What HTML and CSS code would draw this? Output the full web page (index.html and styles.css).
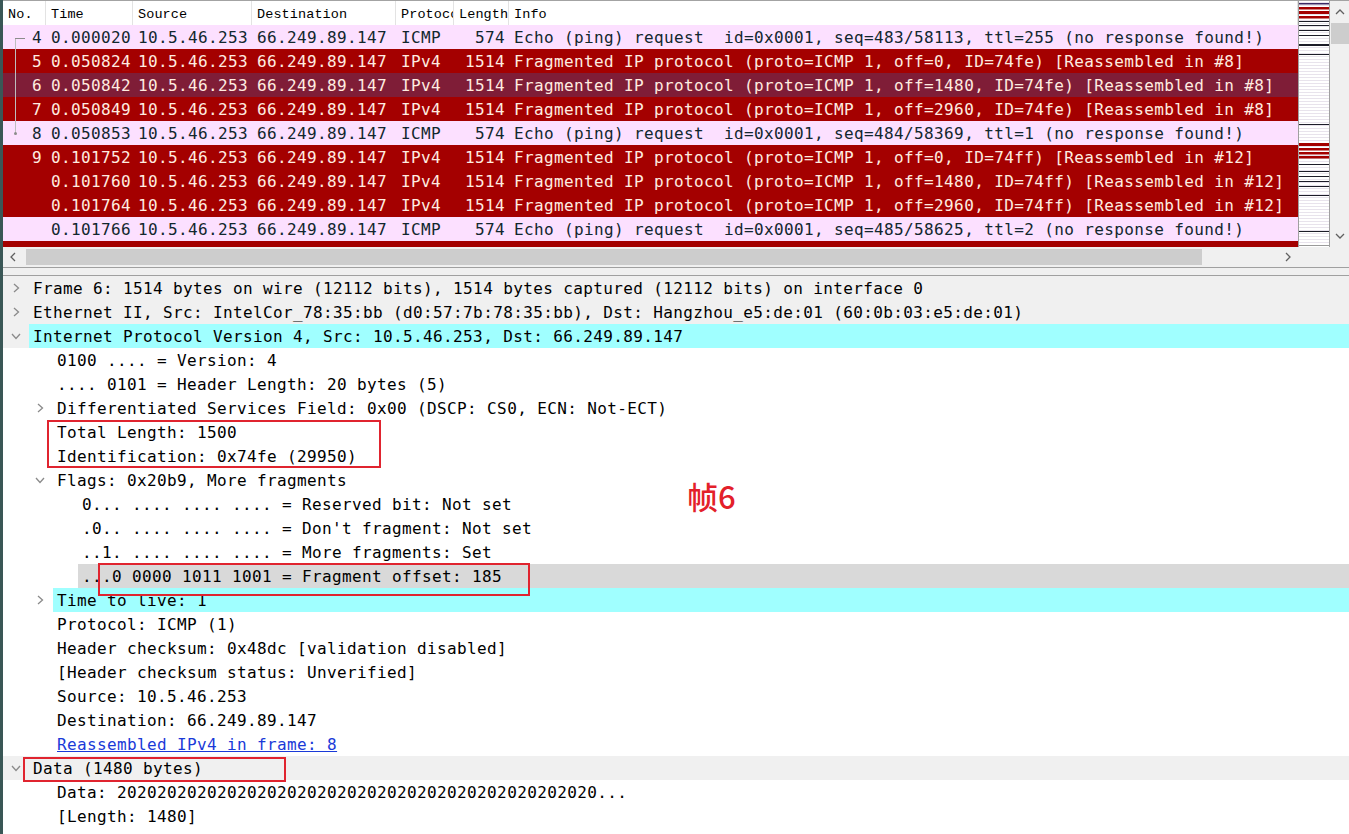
FILE: index.html
```html
<!DOCTYPE html>
<html lang="zh-CN">

<head>
    <meta charset="UTF-8">
    <meta name="viewport" content="width=device-width, initial-scale=1.0">
    <title>Wireshark - 帧6</title>
    <link rel="stylesheet" href="styles.css">
</head>

<body>
    <div class="window">
        <!-- lista de pacotes -->
        <div class="packet-top">
            <div class="packet-list">
                <div class="plist-head">
                    <div class="hc">No.</div>
                    <div class="hc">Time</div>
                    <div class="hc">Source</div>
                    <div class="hc">Destination</div>
                    <div class="hc">Protocol</div>
                    <div class="hc">Length</div>
                    <div class="hc">Info</div>
                </div>

                <div class="prow icmp"><div class="c r">4</div><div class="c">0.000020</div><div class="c">10.5.46.253</div><div class="c">66.249.89.147</div><div class="c">ICMP</div><div class="c r">574</div><div class="c">Echo (ping) request  id=0x0001, seq=483/58113, ttl=255 (no response found!)</div></div>
                <div class="prow frag"><div class="c r">5</div><div class="c">0.050824</div><div class="c">10.5.46.253</div><div class="c">66.249.89.147</div><div class="c">IPv4</div><div class="c r">1514</div><div class="c">Fragmented IP protocol (proto=ICMP 1, off=0, ID=74fe) [Reassembled in #8]</div></div>
                <div class="prow sel"><div class="c r">6</div><div class="c">0.050842</div><div class="c">10.5.46.253</div><div class="c">66.249.89.147</div><div class="c">IPv4</div><div class="c r">1514</div><div class="c">Fragmented IP protocol (proto=ICMP 1, off=1480, ID=74fe) [Reassembled in #8]</div></div>
                <div class="prow frag"><div class="c r">7</div><div class="c">0.050849</div><div class="c">10.5.46.253</div><div class="c">66.249.89.147</div><div class="c">IPv4</div><div class="c r">1514</div><div class="c">Fragmented IP protocol (proto=ICMP 1, off=2960, ID=74fe) [Reassembled in #8]</div></div>
                <div class="prow icmp"><div class="c r">8</div><div class="c">0.050853</div><div class="c">10.5.46.253</div><div class="c">66.249.89.147</div><div class="c">ICMP</div><div class="c r">574</div><div class="c">Echo (ping) request  id=0x0001, seq=484/58369, ttl=1 (no response found!)</div></div>
                <div class="prow frag"><div class="c r">9</div><div class="c">0.101752</div><div class="c">10.5.46.253</div><div class="c">66.249.89.147</div><div class="c">IPv4</div><div class="c r">1514</div><div class="c">Fragmented IP protocol (proto=ICMP 1, off=0, ID=74ff) [Reassembled in #12]</div></div>
                <div class="prow frag"><div class="c r"></div><div class="c">0.101760</div><div class="c">10.5.46.253</div><div class="c">66.249.89.147</div><div class="c">IPv4</div><div class="c r">1514</div><div class="c">Fragmented IP protocol (proto=ICMP 1, off=1480, ID=74ff) [Reassembled in #12]</div></div>
                <div class="prow frag"><div class="c r"></div><div class="c">0.101764</div><div class="c">10.5.46.253</div><div class="c">66.249.89.147</div><div class="c">IPv4</div><div class="c r">1514</div><div class="c">Fragmented IP protocol (proto=ICMP 1, off=2960, ID=74ff) [Reassembled in #12]</div></div>
                <div class="prow icmp"><div class="c r"></div><div class="c">0.101766</div><div class="c">10.5.46.253</div><div class="c">66.249.89.147</div><div class="c">ICMP</div><div class="c r">574</div><div class="c">Echo (ping) request  id=0x0001, seq=485/58625, ttl=2 (no response found!)</div></div>
                <div class="prow frag"><div class="c r"></div><div class="c">0.152790</div><div class="c">10.5.46.253</div><div class="c">66.249.89.147</div><div class="c">IPv4</div><div class="c r">1514</div><div class="c">Fragmented IP protocol (proto=ICMP 1, off=0, ID=7500) [Reassembled in #16]</div></div>

                <!-- linha de pacotes relacionados -->
                <div class="rel-line"></div>
            </div>

            <div class="minimap">
                <svg width="30" height="245" viewBox="0 0 30 245">
                    <defs>
                        <pattern id="faint" width="30" height="3" patternUnits="userSpaceOnUse">
                            <rect y="1" width="30" height="1" fill="#e8e3ec"/>
                        </pattern>
                    </defs>
                    <rect width="30" height="245" fill="#fff"/>
                    <rect width="30" height="245" fill="url(#faint)"/>
                    <rect y="2" width="30" height="1.5" fill="#3b2a66"/>
                    <rect y="6" width="30" height="2.5" fill="#a40000"/>
                    <rect y="10" width="30" height="3" fill="#a40000"/>
                    <rect y="15" width="30" height="2.5" fill="#a40000"/>
                    <rect y="20" width="30" height="1" fill="#1c1c28"/>
                    <rect y="24" width="30" height="1" fill="#1c1c28"/>
                    <rect y="29" width="30" height="1" fill="#1c1c28"/>
                    <rect y="34" width="30" height="1" fill="#1c1c28"/>
                    <rect y="43" width="30" height="2" fill="#1c1c28"/>
                    <rect y="53" width="30" height="1" fill="#1c1c28"/>
                    <rect y="123" width="30" height="1" fill="#1c1c28"/>
                    <rect y="142" width="30" height="3" fill="#a40000"/>
                    <rect y="147" width="30" height="2.5" fill="#a40000"/>
                    <rect y="151" width="30" height="2.5" fill="#a40000"/>
                    <rect y="155" width="30" height="2.5" fill="#a40000"/>
                    <rect y="163" width="30" height="1" fill="#1c1c28"/>
                    <rect y="170" width="30" height="1" fill="#1c1c28"/>
                    <rect y="175" width="30" height="1" fill="#1c1c28"/>
                    <rect y="180" width="30" height="1" fill="#1c1c28"/>
                    <rect y="185" width="30" height="1" fill="#1c1c28"/>
                    <rect y="194" width="30" height="1" fill="#1c1c28"/>
                    <rect y="230" width="30" height="1" fill="#1c1c28"/>
                    <rect y="244" width="30" height="1" fill="#9a9a9a"/>
                </svg>
            </div>

            <div class="vscroll">
                <div class="vs-arrow"><svg width="10" height="6"><polyline points="1,5 5,1 9,5" fill="none" stroke="#606060" stroke-width="1.3"/></svg></div>
                <div class="vs-thumb"></div>
                <div class="vs-track"></div>
                <div class="vs-arrow"><svg width="10" height="6"><polyline points="1,1 5,5 9,1" fill="none" stroke="#606060" stroke-width="1.3"/></svg></div>
            </div>
        </div>

        <div class="hscroll">
            <div class="hs-arrow"><svg width="6" height="10"><polyline points="5,1 1,5 5,9" fill="none" stroke="#606060" stroke-width="1.3"/></svg></div>
            <div class="hs-thumb"></div>
            <div class="hs-gap"></div>
            <div class="hs-arrow"><svg width="6" height="10"><polyline points="1,1 5,5 1,9" fill="none" stroke="#606060" stroke-width="1.3"/></svg></div>
        </div>

        <div class="splitter"></div>

        <!-- detalhes do pacote -->
        <div class="tree">
            <div class="node top"><span class="tw"><svg width="7" height="10"><polyline points="1,1 5.5,5 1,9" /></svg></span><span class="lbl">Frame 6: 1514 bytes on wire (12112 bits), 1514 bytes captured (12112 bits) on interface 0</span></div>
            <div class="node top"><span class="tw"><svg width="7" height="10"><polyline points="1,1 5.5,5 1,9" /></svg></span><span class="lbl">Ethernet II, Src: IntelCor_78:35:bb (d0:57:7b:78:35:bb), Dst: Hangzhou_e5:de:01 (60:0b:03:e5:de:01)</span></div>
            <div class="node top hl-cyan"><span class="tw"><svg width="10" height="7"><polyline points="1,1 5,5.5 9,1" /></svg></span><span class="lbl">Internet Protocol Version 4, Src: 10.5.46.253, Dst: 66.249.89.147</span></div>
            <div class="node l1"><span class="tw"></span><span class="lbl">0100 .... = Version: 4</span></div>
            <div class="node l1"><span class="tw"></span><span class="lbl">.... 0101 = Header Length: 20 bytes (5)</span></div>
            <div class="node l1"><span class="tw"><svg width="7" height="10"><polyline points="1,1 5.5,5 1,9" /></svg></span><span class="lbl">Differentiated Services Field: 0x00 (DSCP: CS0, ECN: Not-ECT)</span></div>
            <div class="node l1"><span class="tw"></span><span class="lbl">Total Length: 1500</span></div>
            <div class="node l1"><span class="tw"></span><span class="lbl">Identification: 0x74fe (29950)</span></div>
            <div class="node l1"><span class="tw"><svg width="10" height="7"><polyline points="1,1 5,5.5 9,1" /></svg></span><span class="lbl">Flags: 0x20b9, More fragments</span></div>
            <div class="node l2"><span class="tw"></span><span class="lbl">0... .... .... .... = Reserved bit: Not set</span></div>
            <div class="node l2"><span class="tw"></span><span class="lbl">.0.. .... .... .... = Don't fragment: Not set</span></div>
            <div class="node l2"><span class="tw"></span><span class="lbl">..1. .... .... .... = More fragments: Set</span></div>
            <div class="node l2 hl-gray"><span class="tw"></span><span class="lbl">...0 0000 1011 1001 = Fragment offset: 185</span></div>
            <div class="node l1 hl-cyan"><span class="tw"><svg width="7" height="10"><polyline points="1,1 5.5,5 1,9" /></svg></span><span class="lbl">Time to live: 1</span></div>
            <div class="node l1"><span class="tw"></span><span class="lbl">Protocol: ICMP (1)</span></div>
            <div class="node l1"><span class="tw"></span><span class="lbl">Header checksum: 0x48dc [validation disabled]</span></div>
            <div class="node l1"><span class="tw"></span><span class="lbl">[Header checksum status: Unverified]</span></div>
            <div class="node l1"><span class="tw"></span><span class="lbl">Source: 10.5.46.253</span></div>
            <div class="node l1"><span class="tw"></span><span class="lbl">Destination: 66.249.89.147</span></div>
            <div class="node l1"><span class="tw"></span><span class="lbl"><a class="link" href="#">Reassembled IPv4 in frame: 8</a></span></div>
            <div class="node top"><span class="tw"><svg width="10" height="7"><polyline points="1,1 5,5.5 9,1" /></svg></span><span class="lbl">Data (1480 bytes)</span></div>
            <div class="node l1"><span class="tw"></span><span class="lbl">Data: 202020202020202020202020202020202020202020202020...</span></div>
            <div class="node l1"><span class="tw"></span><span class="lbl">[Length: 1480]</span></div>
        </div>

        <!-- marcações em vermelho -->
        <div class="mark mark-1"></div>
        <div class="mark mark-2"></div>
        <div class="mark mark-3"></div>
        <div class="note">帧6</div>
    </div>
</body>

</html>
```

FILE: styles.css
```css
body {
    margin: 0;
    background-color: #fff;
    font-family: "DejaVu Sans Mono", monospace;
    font-size: 16px;
    letter-spacing: 0.37px;
    color: #000;
}

.window {
    position: relative;
    width: 1346px;
    height: 834px;
    border-left: 3px solid #3a5756;
    overflow: hidden;
}

/* lista de pacotes */
.packet-top {
    display: flex;
    height: 246px;
    border-top: 1px solid #a3a3a3;
}

.packet-list {
    position: relative;
    flex: 0 0 1295px;
    overflow: hidden;
}

.plist-head,
.prow {
    display: grid;
    grid-template-columns: 43px 87px 119px 144px 58px 55px 1fr;
}

.plist-head {
    height: 24px;
    font-family: "Liberation Mono", monospace;
    font-size: 13.5px;
    letter-spacing: 0.1px;
}

.hc {
    height: 24px;
    line-height: 27px;
    padding-left: 5px;
    border-right: 1px solid #e3e3e3;
    overflow: hidden;
    white-space: nowrap;
}

.prow {
    height: 24px;
    line-height: 26px;
}

.prow .c {
    height: 24px;
    padding-left: 5px;
    white-space: pre;
    overflow: hidden;
}

.prow .r {
    text-align: right;
    padding-left: 0;
    padding-right: 4px;
}

.icmp {
    background-color: #fce0ff;
    color: #12272e;
}

.frag {
    background-color: #a40000;
    color: #ffece0;
}

.sel {
    background-color: #7f1d37;
    color: #ffece0;
}

.rel-line {
    position: absolute;
    left: 12px;
    top: 37px;
    width: 1px;
    height: 96px;
    background-color: #bdbdbd;
}

.rel-line::before {
    content: "";
    position: absolute;
    left: 0;
    top: 0;
    width: 10px;
    height: 1px;
    background-color: #8c8c8c;
}

.rel-line::after {
    content: "";
    position: absolute;
    left: -1px;
    bottom: -1px;
    width: 3px;
    height: 3px;
    border-radius: 50%;
    background-color: #8c8c8c;
}

.minimap {
    flex: 0 0 32px;
    box-sizing: border-box;
    border-left: 1px solid #a0a0a0;
    border-right: 1px solid #a0a0a0;
}

.minimap svg {
    display: block;
}

.vscroll {
    flex: 1;
    display: flex;
    flex-direction: column;
    background-color: #f0f0f0;
}

.vs-arrow {
    height: 22px;
    display: flex;
    align-items: center;
    justify-content: center;
}

.vs-thumb {
    height: 21px;
    margin-left: 1px;
    background-color: #cdcdcd;
}

.vs-track {
    flex: 1;
}

.hscroll {
    display: flex;
    align-items: center;
    height: 20px;
    background-color: #f0f0f0;
    border-bottom: 1px solid #a0a0a0;
}

.hs-arrow {
    width: 20px;
    display: flex;
    align-items: center;
    justify-content: center;
}

.hs-thumb {
    width: 1176px;
    height: 16px;
    margin-left: 3px;
    background-color: #cdcdcd;
}

.hs-gap {
    width: 76px;
}

.splitter {
    height: 7px;
    background-color: #f0f0f0;
    border-bottom: 1px solid #a0a0a0;
}

/* árvore de detalhes */
.node {
    display: flex;
    height: 24px;
    line-height: 26px;
    white-space: pre;
}

.node.top {
    background-color: #f0f0f0;
}

.l1 {
    padding-left: 24px;
}

.l2 {
    padding-left: 49px;
}

.tw {
    flex: 0 0 26px;
    display: flex;
    align-items: center;
    justify-content: center;
}

.tw svg polyline {
    fill: none;
    stroke: #8a8a8a;
    stroke-width: 1.3;
}

.lbl {
    flex: 1;
    height: 24px;
    padding-left: 4px;
    overflow: hidden;
}

.hl-cyan .lbl {
    background-color: #a0ffff;
}

.hl-gray .lbl {
    background-color: #d9d9d9;
}

.link {
    color: #1a3ad8;
    text-decoration: underline;
}

/* marcações */
.mark {
    position: absolute;
    box-sizing: border-box;
    border: 2px solid #e0242f;
}

.mark-1 {
    left: 44px;
    top: 420px;
    width: 334px;
    height: 48px;
}

.mark-2 {
    left: 95px;
    top: 563px;
    width: 432px;
    height: 33px;
}

.mark-3 {
    left: 20px;
    top: 757px;
    width: 263px;
    height: 25px;
}

.note {
    position: absolute;
    left: 684px;
    top: 481px;
    color: #e3202a;
    font-family: "Noto Sans CJK SC", sans-serif;
    font-size: 31px;
    font-weight: 500;
    line-height: 30px;
    letter-spacing: 0;
}
```
